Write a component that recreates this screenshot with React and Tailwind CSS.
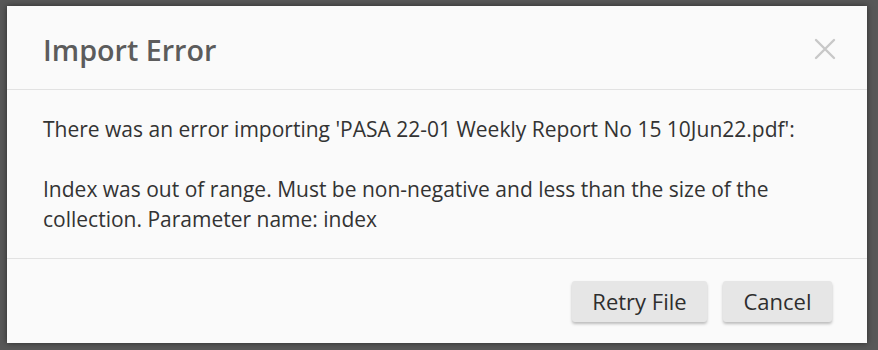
export default function App() {
  return (
    <div className="w-[878px] h-[350px] bg-[#585858] pt-[6px] pl-[7px] overflow-hidden" style={{ fontFamily: '"Open Sans", sans-serif' }}>
      <div className="w-[860px] h-[337px] bg-[#fafafa] flex flex-col shadow-[0_0_6px_rgba(0,0,0,0.5)]">
        {/* Header */}
        <div className="h-[84px] flex items-center justify-between pl-[36px] pr-[30px] border-b border-[#e2e2e2]">
          <h1 className="text-[28.7px] font-semibold text-[#5c5c5c] pt-[4px]">Import Error</h1>
          <svg width="22" height="22" viewBox="0 0 22 22" className="mr-[1px] mt-[2px]">
            <path d="M2 2 L20 20 M20 2 L2 20" stroke="#c8c8c8" strokeWidth="2.4" strokeLinecap="round" />
          </svg>
        </div>

        {/* Body */}
        <div className="px-[36px] py-[24px] text-[21px] leading-[30px] text-[#333333] border-b border-[#e2e2e2]">
          <p>There was an error importing 'PASA 22-01 Weekly Report No 15 10Jun22.pdf':</p>
          <p className="mt-[30px]">
            Index was out of range. Must be non-negative and less than the size of the collection. Parameter name: index
          </p>
        </div>

        {/* Footer */}
        <div className="flex-1 flex items-center justify-end gap-4 pr-[35px]">
          <button className="h-[41px] w-[135px] rounded-[3px] bg-[#e6e6e6] text-[22px] text-[#2e2e2e] shadow-[0_2px_3px_rgba(0,0,0,0.25)]">
            Retry File
          </button>
          <button className="h-[41px] w-[109px] rounded-[3px] bg-[#e6e6e6] text-[22px] text-[#2e2e2e] shadow-[0_2px_3px_rgba(0,0,0,0.25)]">
            Cancel
          </button>
        </div>
      </div>
    </div>
  );
}
